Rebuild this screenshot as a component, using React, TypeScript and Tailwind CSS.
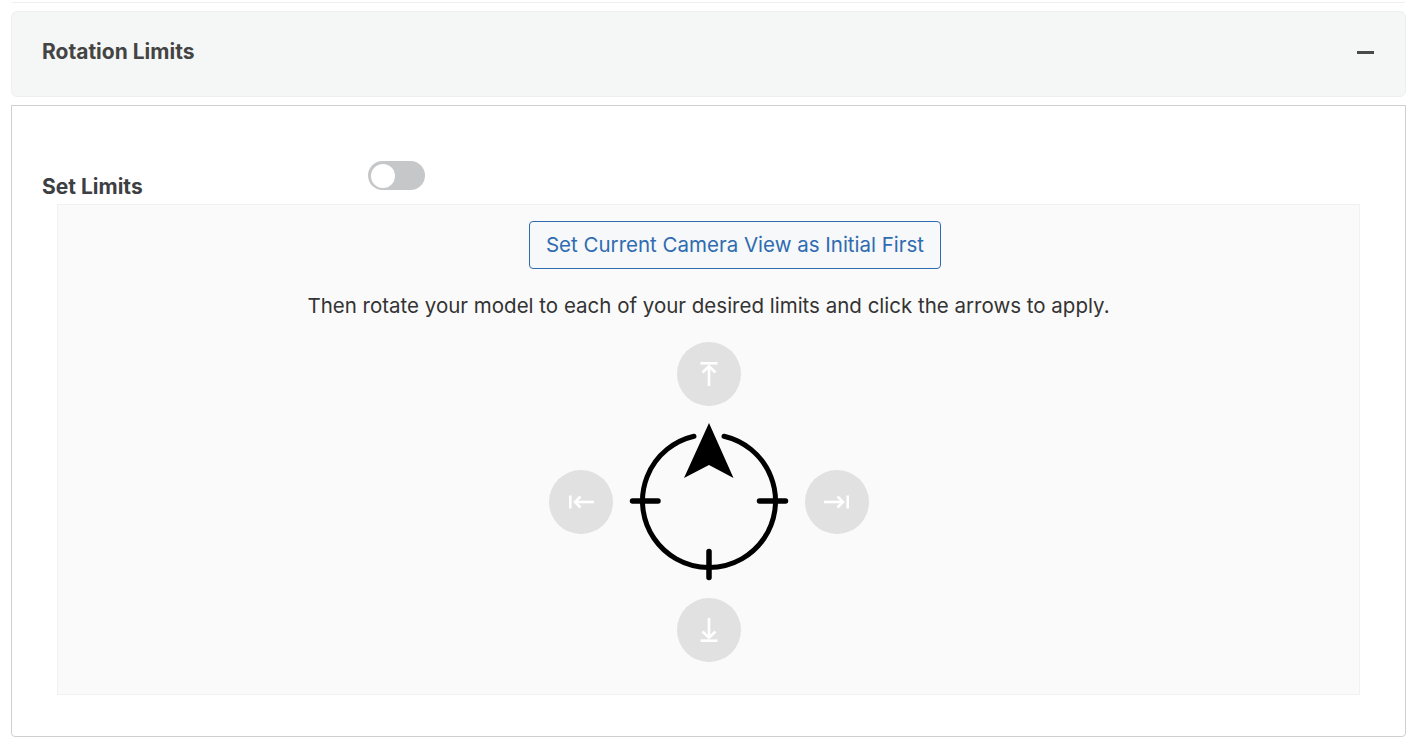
import React from 'react';

const font = { fontFamily: 'Inter, "Liberation Sans", sans-serif' };

const UpIcon: React.FC<{ down?: boolean }> = ({ down }) => (
  <svg width="24" height="26" viewBox="0 0 24 26" fill="none" stroke="#fff" strokeWidth="2.6" className={down ? 'rotate-180' : ''}>
    <path d="M3.5 2.3H20.5" />
    <path d="M12 5V25" />
    <path d="M5.5 11.5L12 5.3L18.5 11.5" />
  </svg>
);

const SideIcon: React.FC<{ right?: boolean }> = ({ right }) => (
  <svg width="26" height="16" viewBox="0 0 26 16" fill="none" stroke="#fff" strokeWidth="2.6" className={right ? 'rotate-180' : ''}>
    <path d="M2.3 1.5V14.5" />
    <path d="M7 8H26" />
    <path d="M12.5 2.5L7 8L12.5 13.5" />
  </svg>
);

const ArrowButton: React.FC<{ className: string; children: React.ReactNode }> = ({ className, children }) => (
  <button className={`flex h-16 w-16 items-center justify-center rounded-full bg-[#e1e1e1] ${className}`}>
    {children}
  </button>
);

const Compass: React.FC = () => (
  <svg width="192" height="192" viewBox="0 0 192 192" fill="none" stroke="#000" strokeLinecap="round" className="col-start-2 row-start-2">
    <path d="M81 30.2A66.5 66.5 0 1 0 111 30.2" strokeWidth="5" />
    <path d="M19.5 95H45M146.5 95H172.5M96 145.5V171.5" strokeWidth="5.5" />
    <path d="M96 17L120.5 72L96 59L71 72Z" fill="#000" stroke="none" />
  </svg>
);

export default function App() {
  return (
    <div className="h-[738px] w-[1412px] overflow-hidden bg-white pl-[11px] pr-[6px]" style={font}>
      <div className="h-[3px] rounded-b border-b border-[#eeeeee]" />
      <div className="mt-2 flex h-[86px] items-center justify-between rounded-md border border-[#eef0ef] bg-[#f5f7f6] pb-[4px] pl-[30px] pr-[31px]">
        <h2 className="text-[21px] font-bold text-[#444444]">Rotation Limits</h2>
        <div className="h-[3px] w-[17px] bg-[#4a4a4a]" />
      </div>
      <div className="mt-2 h-[632px] rounded-b border border-[#cfcfcf] bg-white px-[45px] pt-[55px]">
        <div className="relative h-[43px]">
          <span className="absolute left-[-15px] top-[14px] text-[21px] font-bold leading-[24px] text-[#3d4043]">Set Limits</span>
          <div className="absolute left-[311px] top-0 flex h-[29px] w-[57px] items-center rounded-full bg-[#c6c7c9] pl-[3px]">
            <div className="h-[24px] w-[24px] rounded-full bg-white" />
          </div>
        </div>
        <div className="flex h-[491px] flex-col items-center border border-[#f1f1f1] bg-[#fafafa] pt-4">
          <button className="ml-[53px] flex h-[48px] w-[412px] items-center justify-center rounded border border-[#2f6bb0] bg-[#f6f8f9] text-[20.5px] text-[#2f6bb0]">
            Set Current Camera View as Initial First
          </button>
          <p className="mt-[23px] text-[20.5px] leading-[28px] text-[#333333]">
            Then rotate your model to each of your desired limits and click the arrows to apply.
          </p>
          <div className="mt-[22px] grid grid-cols-[64px_192px_64px] grid-rows-[64px_192px_64px] items-center justify-items-center">
            <ArrowButton className="col-start-2 row-start-1"><UpIcon /></ArrowButton>
            <ArrowButton className="col-start-1 row-start-2"><SideIcon /></ArrowButton>
            <Compass />
            <ArrowButton className="col-start-3 row-start-2"><SideIcon right /></ArrowButton>
            <ArrowButton className="col-start-2 row-start-3"><UpIcon down /></ArrowButton>
          </div>
        </div>
      </div>
    </div>
  );
}
